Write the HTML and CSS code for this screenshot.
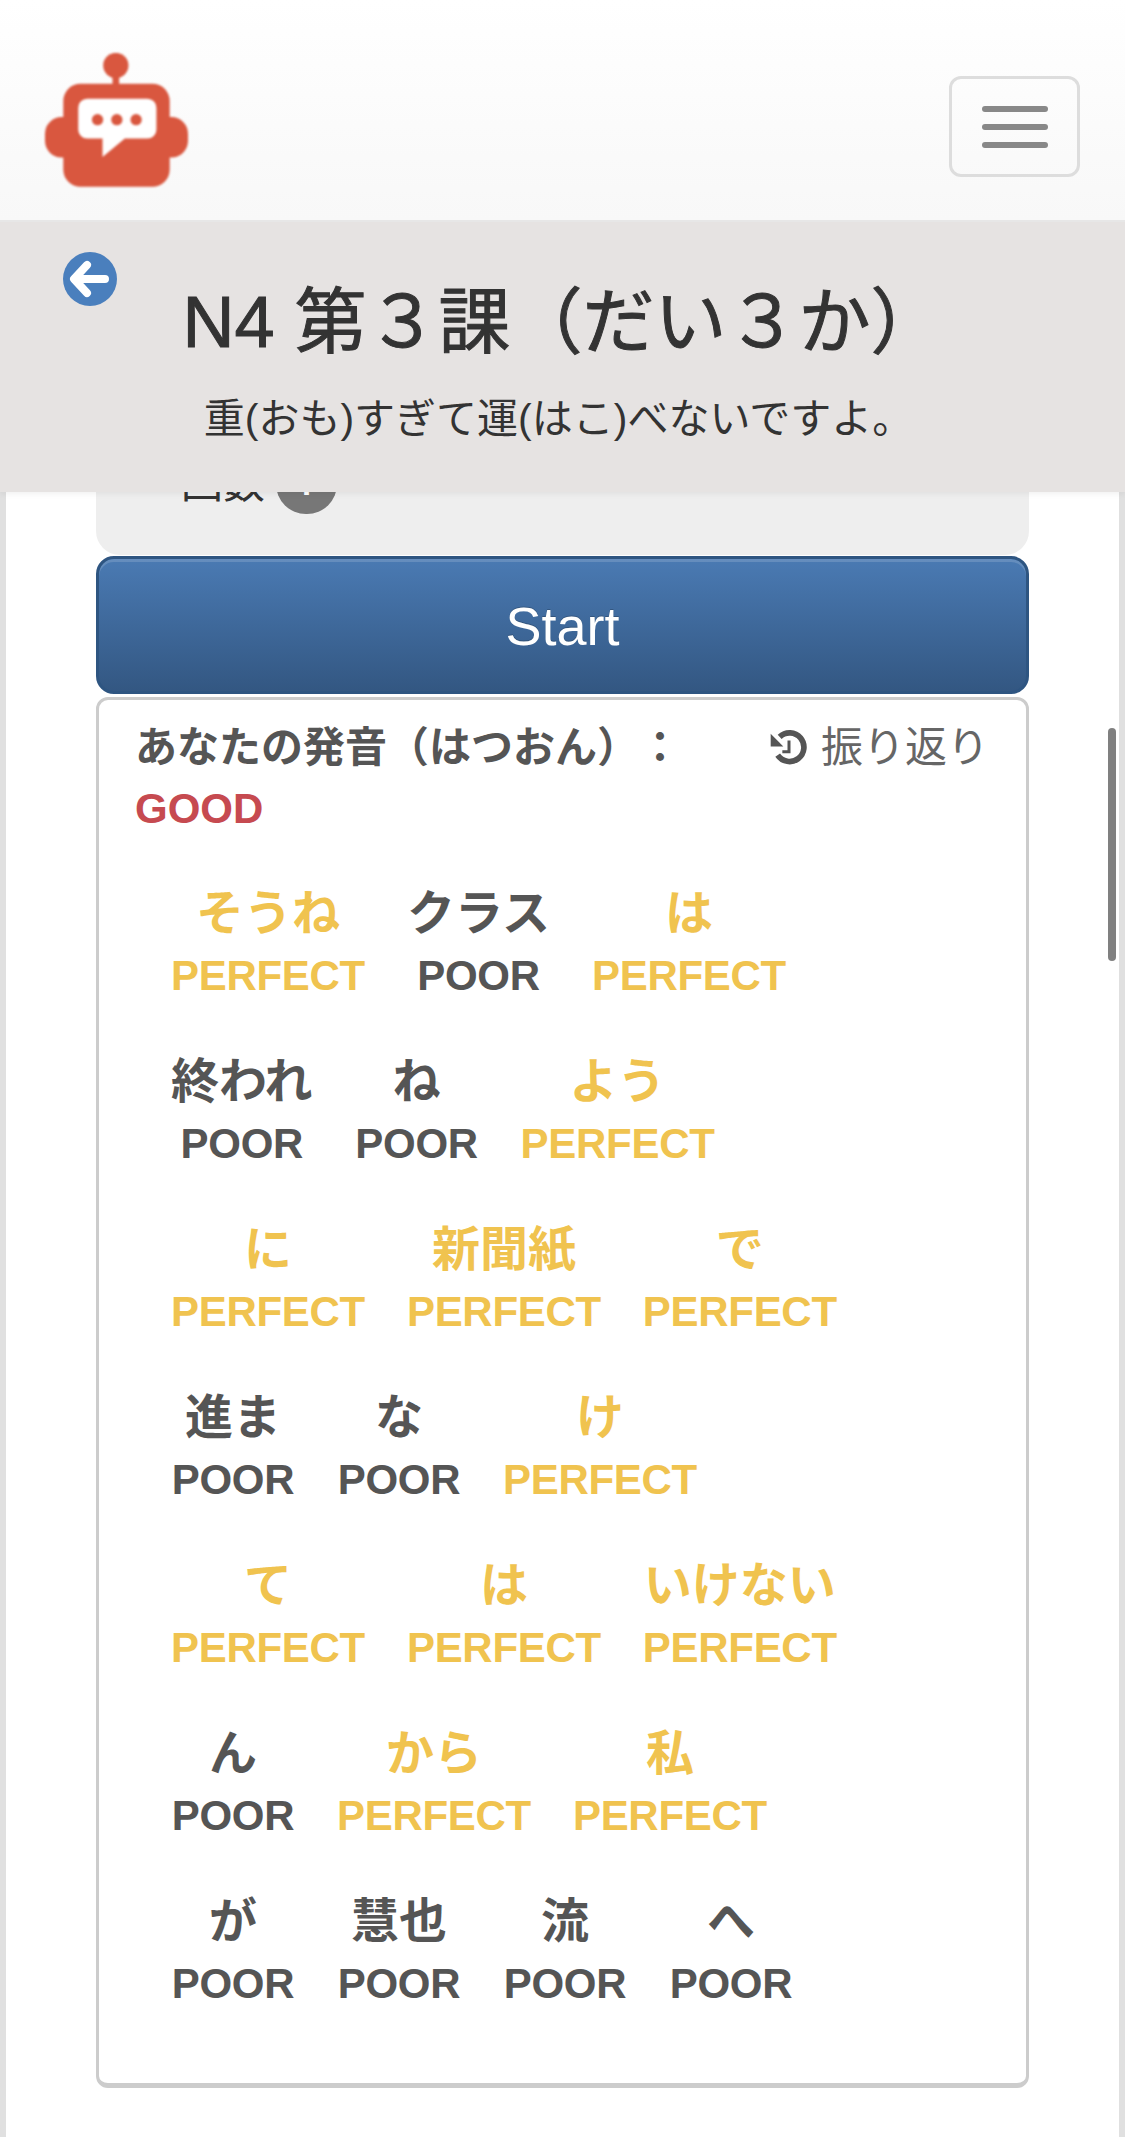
FILE: index.html
```html
<!DOCTYPE html>
<html lang="ja">

<head>
  <meta charset="UTF-8">
  <meta name="viewport" content="width=device-width, initial-scale=1.0">
  <title>N4 第３課</title>
  <link rel="stylesheet" href="styles.css">
</head>

<body>
  <div class="top">
    <nav class="navbar">
      <svg class="logo" viewBox="45 38 430 402" aria-hidden="true">
        <circle cx="258" cy="75" r="38" fill="#d9573f" />
        <rect x="248" y="100" width="20" height="45" fill="#d9573f" />
        <rect x="45" y="230" width="430" height="122" rx="50" fill="#d9573f" />
        <rect x="100" y="130" width="320" height="310" rx="52" fill="#d9573f" />
        <path d="M172 175H353a27 27 0 0 1 27 27V268a27 27 0 0 1-27 27H285L218 350V295H172a27 27 0 0 1-27-27V202a27 27 0 0 1 27-27Z" fill="#fff" />
        <circle cx="203" cy="238" r="17" fill="#d9573f" />
        <circle cx="261" cy="238" r="17" fill="#d9573f" />
        <circle cx="319" cy="238" r="17" fill="#d9573f" />
      </svg>
      <button class="toggle" type="button">
        <span class="toggle-bar"></span>
        <span class="toggle-bar"></span>
        <span class="toggle-bar"></span>
      </button>
    </nav>
    <header class="lesson">
      <svg class="back" viewBox="0 0 54 54" aria-hidden="true">
        <circle cx="27" cy="27" r="27" fill="#4a7fbd" />
        <path d="M24 13L11 27L24 41M13 27H42" fill="none" stroke="#fff" stroke-width="8" stroke-linecap="round" stroke-linejoin="round" />
      </svg>
      <h1 class="lesson-title">N4 第３課（だい３か）</h1>
      <p class="lesson-sub">重(おも)すぎて運(はこ)べないですよ。</p>
    </header>
  </div>

  <main class="page">
    <div class="scrollbar"></div>
    <div class="setting">回数<span class="badge">+</span></div>
    <button class="start" type="button">Start</button>

    <section class="result">
      <div class="result-head">
        <strong>あなたの発音（はつおん）：</strong>
        <a class="review" href="#">
          <svg class="review-icon" viewBox="40 55 120 110" aria-hidden="true">
            <path d="M72 75A43 43 0 1 1 66 130" fill="none" stroke="#555" stroke-width="17" />
            <path d="M45 66V104H83Z" fill="#555" />
            <path d="M100 86V120H80" fill="none" stroke="#555" stroke-width="9" />
          </svg>
          振り返り
        </a>
      </div>
      <div class="score">GOOD</div>

      <div class="words">
        <div class="word perfect"><span class="kana">そうね</span><span class="mark">PERFECT</span></div>
        <div class="word"><span class="kana">クラス</span><span class="mark">POOR</span></div>
        <div class="word perfect"><span class="kana">は</span><span class="mark">PERFECT</span></div>

        <div class="word"><span class="kana">終われ</span><span class="mark">POOR</span></div>
        <div class="word"><span class="kana">ね</span><span class="mark">POOR</span></div>
        <div class="word perfect"><span class="kana">よう</span><span class="mark">PERFECT</span></div>

        <div class="word perfect"><span class="kana">に</span><span class="mark">PERFECT</span></div>
        <div class="word perfect"><span class="kana">新聞紙</span><span class="mark">PERFECT</span></div>
        <div class="word perfect"><span class="kana">で</span><span class="mark">PERFECT</span></div>

        <div class="word"><span class="kana">進ま</span><span class="mark">POOR</span></div>
        <div class="word"><span class="kana">な</span><span class="mark">POOR</span></div>
        <div class="word perfect"><span class="kana">け</span><span class="mark">PERFECT</span></div>

        <div class="word perfect"><span class="kana">て</span><span class="mark">PERFECT</span></div>
        <div class="word perfect"><span class="kana">は</span><span class="mark">PERFECT</span></div>
        <div class="word perfect"><span class="kana">いけない</span><span class="mark">PERFECT</span></div>

        <div class="word"><span class="kana">ん</span><span class="mark">POOR</span></div>
        <div class="word perfect"><span class="kana">から</span><span class="mark">PERFECT</span></div>
        <div class="word perfect"><span class="kana">私</span><span class="mark">PERFECT</span></div>

        <div class="word"><span class="kana">が</span><span class="mark">POOR</span></div>
        <div class="word"><span class="kana">慧也</span><span class="mark">POOR</span></div>
        <div class="word"><span class="kana">流</span><span class="mark">POOR</span></div>
        <div class="word"><span class="kana">へ</span><span class="mark">POOR</span></div>
      </div>
    </section>
  </main>
</body>

</html>
```

FILE: styles.css
```css
* {
  margin: 0;
  padding: 0;
  box-sizing: border-box;
}

body {
  min-height: 100vh;
  display: flex;
  flex-direction: column;
  overflow: hidden;
  background-color: #e0e0e0;
  color: #333;
  font-family: "Liberation Sans", "Noto Sans CJK JP", sans-serif;
  font-size: 42px;
  line-height: 60px;
  text-spacing-trim: space-all;
}

.top {
  position: relative;
  z-index: 2;
  box-shadow: 0 2px 6px rgba(0, 0, 0, .06);
}

.navbar {
  height: 222px;
  display: flex;
  justify-content: space-between;
  align-items: flex-start;
  padding: 53px 45px 0 45px;
  background: linear-gradient(#fff, #f8f8f8);
  border-bottom: 2px solid #e7e7e7;
}

.logo {
  width: 143px;
  height: 134px;
  filter: blur(.8px);
}

.toggle {
  width: 131px;
  height: 101px;
  margin-top: 23px;
  display: flex;
  flex-direction: column;
  justify-content: center;
  align-items: center;
  gap: 12px;
  background: transparent;
  border: 3px solid #ddd;
  border-radius: 12px;
}

.toggle-bar {
  width: 66px;
  height: 6px;
  border-radius: 3px;
  background-color: #888;
}

.lesson {
  position: relative;
  height: 270px;
  padding-top: 61px;
  text-align: center;
  background-color: #e6e3e2;
}

.back {
  position: absolute;
  left: 63px;
  top: 30px;
  width: 54px;
  height: 54px;
}

.lesson-title {
  font-size: 72px;
  font-weight: 400;
  line-height: 79px;
  -webkit-text-stroke: 1px #333;
}

.lesson-sub {
  margin-top: 27px;
  padding-right: 8px;
  font-size: 41px;
}

.page {
  flex: 1;
  position: relative;
  margin: 0 6px;
  padding: 0 90px;
  background-color: #fff;
}

.scrollbar {
  position: absolute;
  right: 3px;
  top: 236px;
  width: 8px;
  height: 233px;
  border-radius: 4px;
  background-color: #808080;
}

.setting {
  height: 101px;
  margin-top: -38px;
  padding: 0 0 41px 85px;
  display: flex;
  align-items: center;
  gap: 11px;
  background-color: #eee;
  border-radius: 0 0 24px 24px;
}

.badge {
  width: 61px;
  height: 60px;
  border-radius: 30px;
  background-color: #777;
  color: #fff;
  font-weight: 700;
  text-align: center;
}

.start {
  display: block;
  width: 100%;
  height: 138px;
  margin-top: 1px;
  padding-top: 2px;
  background: linear-gradient(#4a7ab3, #335782);
  border: 3px solid #2e5581;
  border-radius: 18px;
  box-shadow: inset 0 3px 0 rgba(255, 255, 255, .15);
  color: #fff;
  font-family: inherit;
  font-size: 54px;
  text-shadow: 0 -1px 0 rgba(0, 0, 0, .2);
}

.result {
  height: 1391px;
  margin-top: 3px;
  padding: 18px 37px 0 36px;
  border: 3px solid #ccc;
  border-bottom-width: 5px;
  border-radius: 12px;
  color: #555;
}

.result-head {
  display: flex;
  justify-content: space-between;
}

.review {
  display: flex;
  align-items: center;
  gap: 12px;
  color: #666;
  text-decoration: none;
}

.review-icon {
  width: 40px;
  height: 37px;
}

.score {
  margin-top: 1px;
  color: #c64a50;
  font-weight: 700;
}

.words {
  display: flex;
  flex-wrap: wrap;
  gap: 44px 42px;
  width: 740px;
  margin: 43px 0 0 36px;
}

.word {
  min-width: 124px;
  display: flex;
  flex-direction: column;
  align-items: center;
}

.kana {
  font-size: 48px;
  font-weight: 700;
  line-height: 64px;
  white-space: nowrap;
}

.mark {
  font-weight: 700;
  letter-spacing: -.3px;
}

.perfect {
  color: #f0c34f;
}
```
